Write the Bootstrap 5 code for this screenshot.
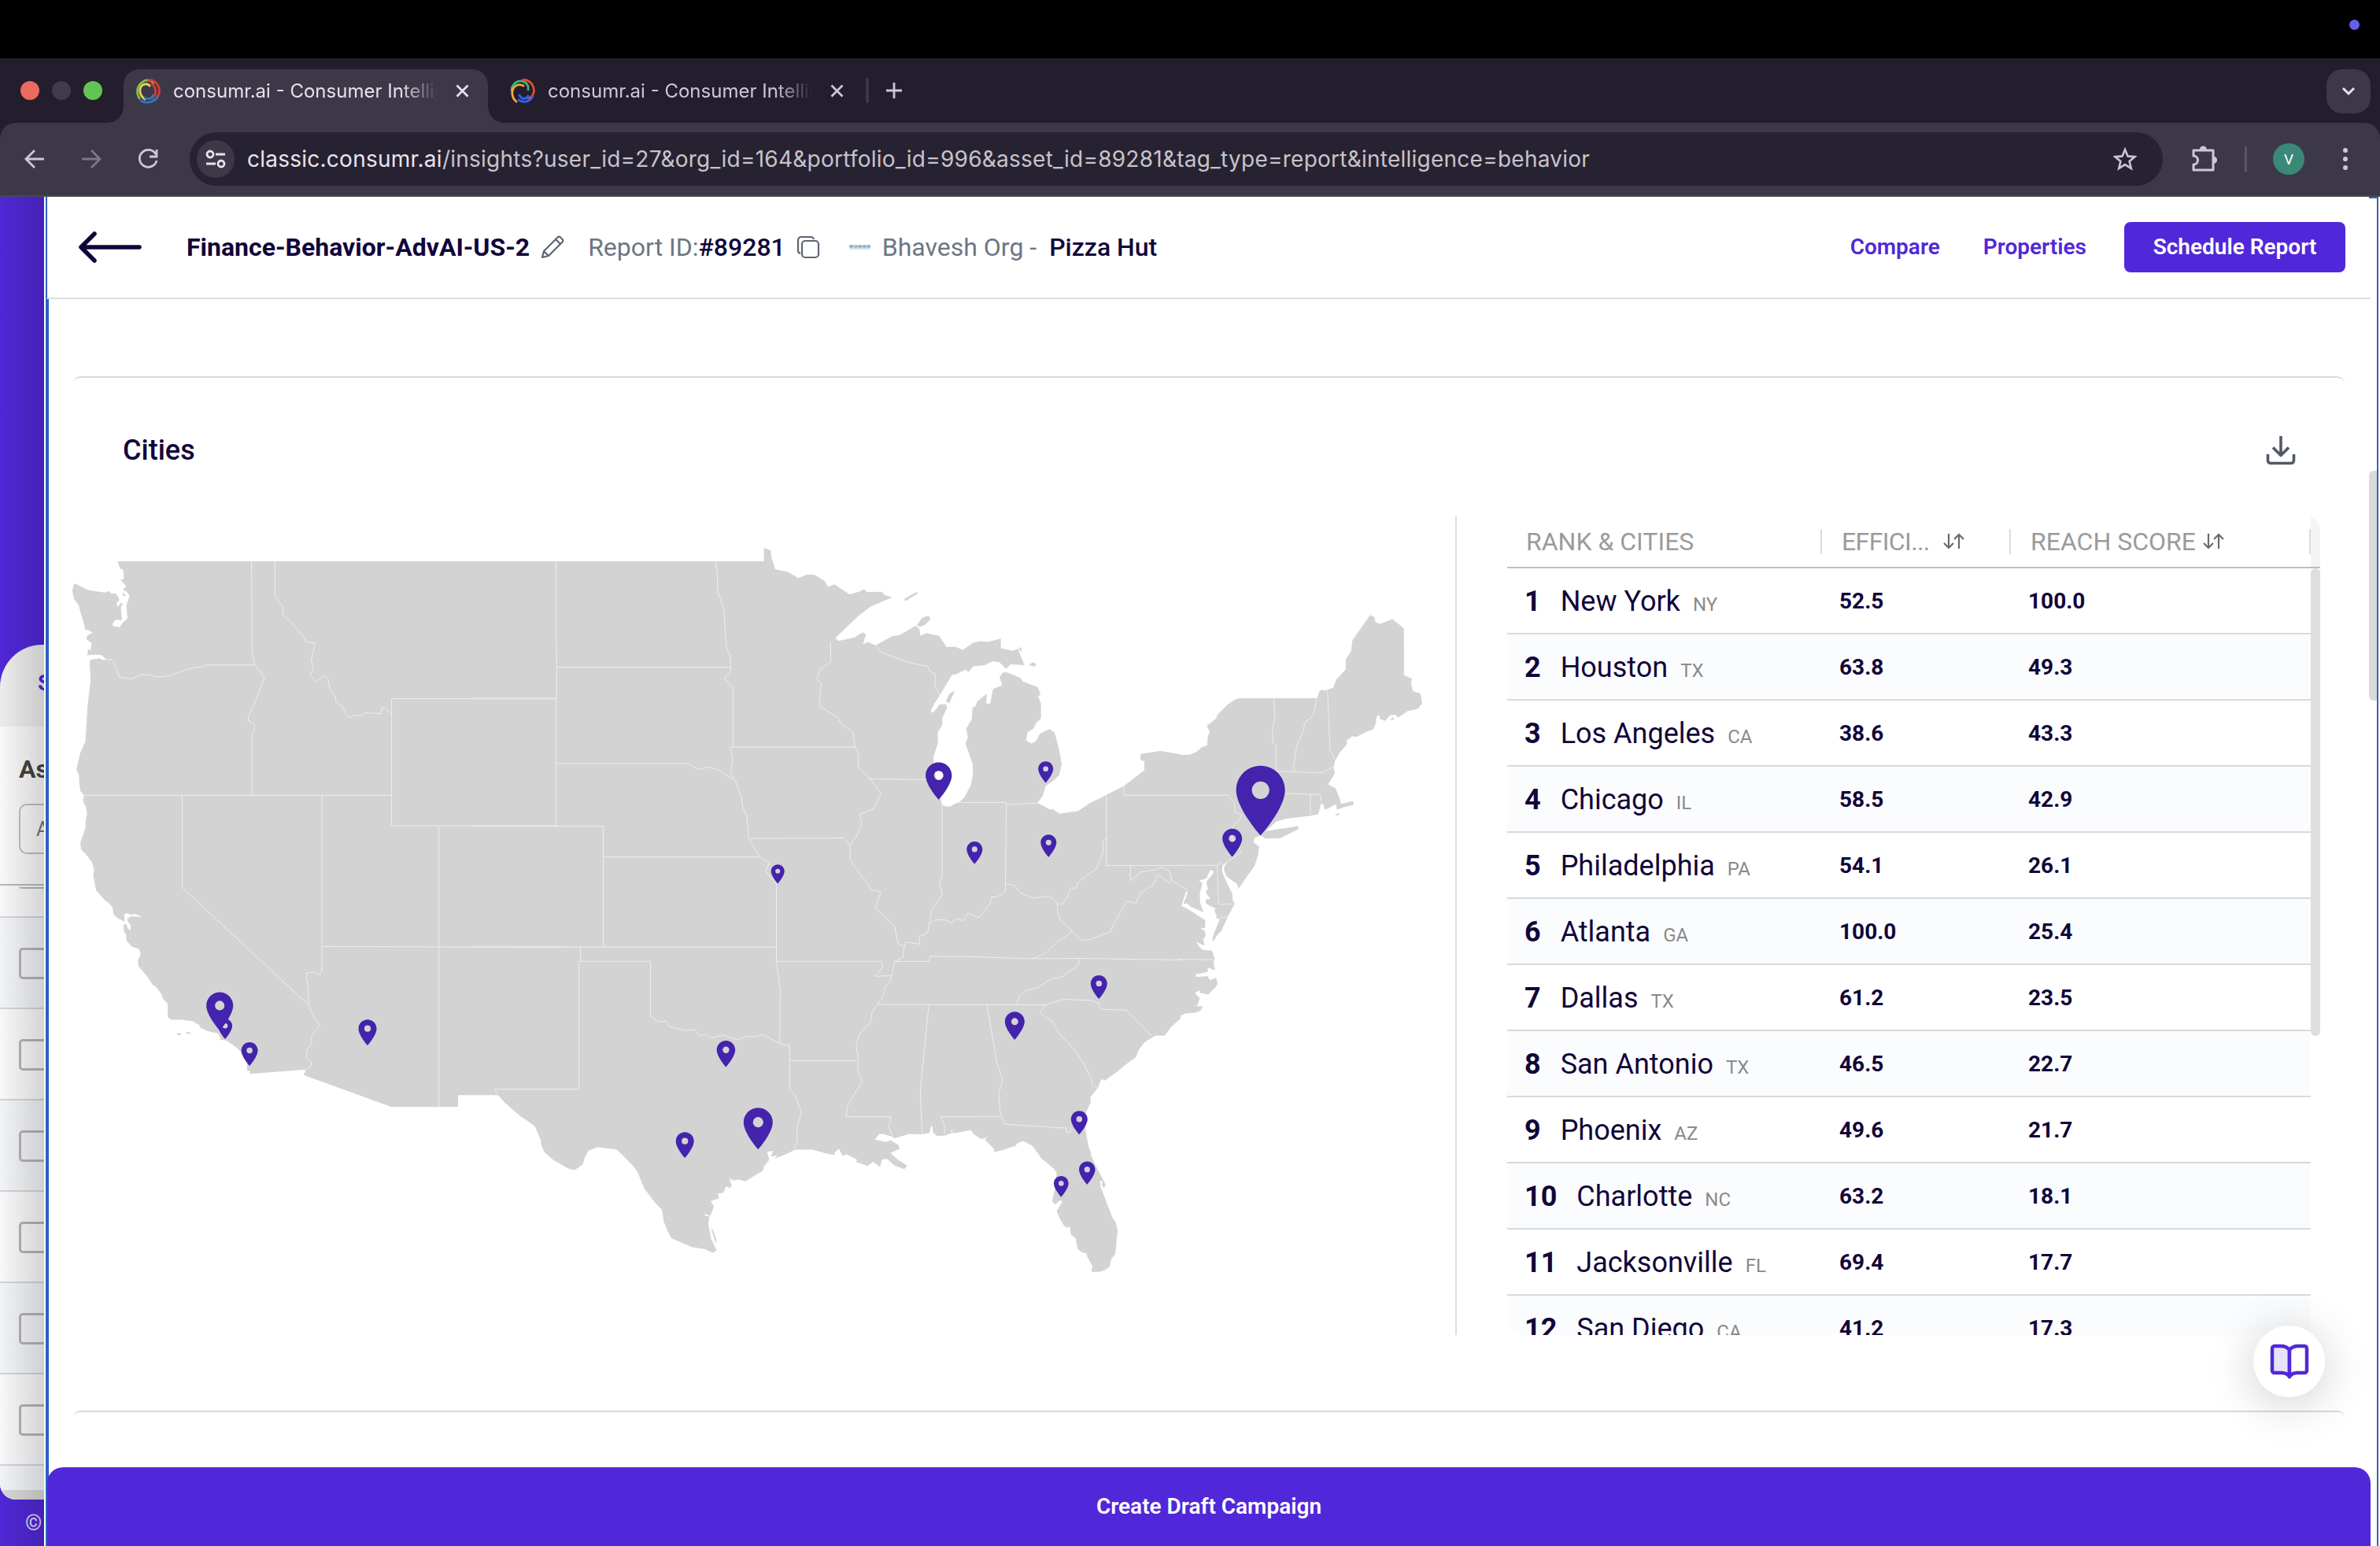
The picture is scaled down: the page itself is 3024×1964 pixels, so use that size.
<!DOCTYPE html>
<html lang="en">
<head>
<meta charset="utf-8">
<title>consumr.ai - Consumer Intelligence</title>
<link href="https://cdn.jsdelivr.net/npm/bootstrap@5.3.0/dist/css/bootstrap.min.css" rel="stylesheet">
<style>
:root{--brand:#5128d9;--ink:#110639;--edge:#2b5fc7}
html,body{width:3024px;height:1964px;overflow:hidden}
body{font-family:Roboto,"Liberation Sans",sans-serif;color:var(--ink);background:#fff;line-height:1}
svg{display:block;flex:none}
.menubar{height:74px;background:#000;padding-right:26px}
.rec-dot{width:13px;height:13px;border-radius:50%;background:#6461ee;margin-top:-11px}
.tabstrip{height:82px;background:#241d2e;font:24px Inter,sans-serif;color:#cfc6dc;padding:14px 12px 0 26px}
.lights{gap:16px;height:54px;margin-right:27px}
.lights i{width:24px;height:24px;border-radius:50%}
.tab-item{height:68px;width:463px;padding:0 24px 13px 15px;position:relative}
.tab-item.tab-on{background:#3d3848;border-radius:20px 20px 0 0;color:#e5e1ea}
.tab-on:before,.tab-on:after{content:"";position:absolute;bottom:0;width:20px;height:20px}
.tab-on:before{left:-20px;background:radial-gradient(circle at 0 0,transparent 19.5px,#3d3848 20px)}
.tab-on:after{right:-20px;background:radial-gradient(circle at 100% 0,transparent 19.5px,#3d3848 20px)}
.tab-title{width:336px;overflow:hidden;white-space:nowrap;line-height:34px;padding-top:1px;-webkit-mask-image:linear-gradient(90deg,#000 86%,transparent)}
.tab-sep{width:4px;height:32px;border-radius:2px;background:#3d3848}
.tab-menu{width:56px;height:56px;border-radius:20px;background:#3d3848}
.toolbar-wrap{background:#241d2e}
.toolbar{height:94px;background:#3d3848;border-radius:20px 20px 0 0;border-bottom:2px solid #4b4551;padding:0 40px 0 31px}
.omni{height:68px;width:2507px;border-radius:34px;background:#272231;padding:0 33px 0 9px;font:28px Inter,sans-serif;color:#c7c3cb}
.omni b{font-weight:400;color:#e8e4ec}
.url-text{letter-spacing:.245px}
.site-btn{width:48px;height:48px;border-radius:50%;background:#3d3848}
.avatar-v{width:40px;height:40px;border-radius:50%;background:#3a8878;color:#fff;font-size:19px}
.viewport{height:1714px}
.under{width:56px;height:1714px;background:var(--brand);position:relative;overflow:hidden}
.under:after{content:"";position:absolute;inset:0;background:linear-gradient(90deg,rgba(0,0,0,.02),rgba(0,0,0,.16))}
.under-panel{margin-top:569px;height:1086px;width:400px;border-radius:54px 0 0 20px;background:#f1f1f1;overflow:hidden}
.under-tab{height:104px;padding:35px 0 0 48px;color:var(--brand);font-weight:700;font-size:28px}
.under-head{height:202px;background:#fdfdfd;padding:36px 0 0 24px;border-bottom:2px solid #b3bdc6}
.under-head h6{font-size:32px;font-weight:700;color:#444;margin:0 0 26px;line-height:36px}
.under-input{height:64px;border:2px solid #c3c3c3;border-radius:10px;padding:18px 20px;font-size:25px;color:#777}
.under-row{height:116px;border-bottom:2px solid #d6d9dc;padding:38px 0 0 24px;background:#fdfdfd}
.under-row i{display:block;width:40px;height:40px;border:3px solid #b7b7b7;border-radius:5px}
.under-row.alt{background:#f6f8fb}
.under-foot{color:#e6defc;font-size:27px;padding:17px 0 0 32px;white-space:nowrap}
.modal-pane{width:2964px;margin-left:2px;border-left:4px solid var(--edge);background:#fff;position:relative}
.pane-edge{width:2px;background:#3d62ad;position:absolute;right:0;top:0;bottom:0;z-index:3}
.pane-edge:before{content:"";position:absolute;right:0;top:0;width:12px;height:2px;background:var(--edge)}
.pane-scroll{width:12px;height:292px;border-radius:6px 0 0 6px;background:#d9d9de;position:absolute;right:0;top:348px}
.pane-head{height:130px;width:2953px;margin-left:-3px;border-left:1px solid var(--edge);border-bottom:2px solid #dedfe1;background:#fff;padding:0 32px 0 40px;font-size:32px}
.muted-ink{color:#6c7683}
.link-brand{color:var(--brand);font-size:28px;font-weight:600;text-decoration:none}
.btn-brand{background:var(--brand);color:#fff;font-size:28px;font-weight:600;width:281px;height:64px;border-radius:8px;padding:0;line-height:64px;border:0}
.pane-body{height:1484px;padding:98px 0 0 31px;overflow:hidden}
.sect{width:2886px;border-top:2px solid #d8dadd;border-radius:9px 9px 0 0}
.sect-first{height:1314px}
.sect-title{height:176px;padding:0 62px 0 63px;font-size:36px;font-weight:500}
.map-col{width:1758px;height:1040px;border-right:2px solid #dcdde0;padding-left:1px}
.land path{fill:#d3d3d3}
.lines path{fill:none;stroke:#eee;stroke-width:1;vector-effect:non-scaling-stroke}
.city-grid{width:1034px;height:1040px;margin-left:64px;border-radius:20px 20px 0 20px;overflow:hidden}
.grid-head{height:66px;border-bottom:2px solid #b9bfc5;font-size:32px;color:#9b9b9b;width:1033px}
.h-cell{height:64px}
.h-cell + .h-cell:before{content:"";width:2px;height:32px;background:#dadcde;margin-right:25px}
.hd{white-space:nowrap}
.c1{width:398px}.c2{width:240px}.c3{width:383px}
.grid-row{height:84px;width:1021px;border-bottom:2px solid #d7dadd;font-size:28px;font-weight:700;padding-top:1px}
.grid-row:nth-child(even){background:#fbfcfe}
.grid-row .c1{padding-left:22px;font-size:36px}
.c-name{font-weight:400;margin-left:25px}
.c-state{font-weight:400;font-size:24px;color:#8a8a8a;margin-left:16px}
.grid-row .c2{padding-left:24px}.grid-row .c3{padding-left:24px}
.grid-thumb{width:12px;height:594px;background:#dedede;border-radius:6px}
.head-corner{width:12px;height:64px;background:#f4f4f4}
.book-btn{position:absolute;left:2801px;top:1434px;width:91px;height:91px;border-radius:50%;background:#fff;box-shadow:0 8px 60px rgba(0,0,0,.2)}
.draft-bar{height:100px;width:2952px;margin-left:-2px;border-radius:20px 20px 0 0;background:var(--brand);color:#fff;font-size:28px;font-weight:600;position:relative}
</style>
<script src="https://cdn.jsdelivr.net/npm/bootstrap@5.3.0/dist/js/bootstrap.bundle.min.js"></script>
</head>
<body>
<div class="menubar d-flex justify-content-end align-items-center"><span class="rec-dot"></span></div>

<div class="tabstrip d-flex align-items-start">
  <div class="lights d-flex align-items-center"><i style="background:#ec6a5e"></i><i style="background:#413b4b"></i><i style="background:#61c454"></i></div>
  <div class="tab-item tab-on d-flex align-items-center">
    <svg width="32" height="32" viewBox="0 0 32 32" fill="none" stroke-width="2.800" stroke-linecap="round"><path d="M5 25C0 17 3 7 11 3C15 1 20 2 23 5" stroke="#8fbf4a"/><path d="M12 26C6 22 4 14 8 9C11 6 16 6 18 9" stroke="#e2d64e"/><path d="M17 1.500C27 2 32 11 30 19C28.500 24 25 27 22 28" stroke="#d93a34"/><path d="M21 7C27 11 27 20 22 24" stroke="#d93a34"/><path d="M7 28C14 32 24 30 28 23M12 24C17 27 21 25 23 21" stroke="#2d78bd"/></svg>
    <span class="tab-title ms-3">consumr.ai - Consumer Intelligen</span>
    <svg class="ms-auto" width="17" height="17" viewBox="0 0 17 17" stroke="#e5e1ea" stroke-width="2.800"><path d="M1.500 1.500l14 14M15.500 1.500l-14 14"/></svg>
  </div>
  <div class="tab-item d-flex align-items-center" style="padding-left:28px;width:476px">
    <svg width="32" height="32" viewBox="0 0 32 32" fill="none" stroke-width="2.800" stroke-linecap="round"><path d="M2 15C2 8 8 2 15 3C21 4 24 9 23 14" stroke="#3fb57c"/><path d="M8 29C2 24 1 15 6 10C9 7 14 7 17 9" stroke="#f2a73b"/><path d="M17 1.500C26 1 32 10 30 18C29 22 26 24 23 25" stroke="#ee4b2b"/><path d="M11 27C19 32 27 28 29 22M12 21C15 27 21 26 23 22" stroke="#2861f0"/></svg>
    <span class="tab-title ms-3">consumr.ai - Consumer Intelligen</span>
    <svg class="ms-auto" width="17" height="17" viewBox="0 0 17 17" stroke="#cfc6dc" stroke-width="2.800"><path d="M1.500 1.500l14 14M15.500 1.500l-14 14"/></svg>
  </div>
  <div class="d-flex align-items-center" style="height:54px;gap:21px;margin-left:4px"><span class="tab-sep"></span>
    <svg width="22" height="22" viewBox="0 0 22 22" stroke="#cfc6dc" stroke-width="2.800"><path d="M11 1v20M1 11h20"/></svg></div>
  <div class="tab-menu ms-auto d-flex align-items-center justify-content-center"><svg width="18" height="12" viewBox="0 0 18 12" fill="none" stroke="#e8e4ec" stroke-width="3"><path d="M2 2l7 7 7-7"/></svg></div>
</div>

<div class="toolbar-wrap"><div class="toolbar d-flex align-items-center">
  <svg width="26" height="24" viewBox="0 0 26 24" fill="none" stroke="#cfc6dc" stroke-width="2.800"><path d="M13 1L2 12l11 11M2 12h23"/></svg>
  <svg style="margin-left:46px" width="26" height="24" viewBox="0 0 26 24" fill="none" stroke="#7d7589" stroke-width="2.800"><path d="M13 1l11 11-11 11M24 12H1"/></svg>
  <svg style="margin-left:46px" width="26" height="26" viewBox="0 0 26 26" fill="none" stroke="#cfc6dc" stroke-width="2.800"><path d="M23 7A11 11 0 1 0 24 15M24 1v9h-9"/></svg>
  <div class="omni d-flex align-items-center" style="margin-left:40px">
    <span class="site-btn d-flex align-items-center justify-content-center"><svg width="26" height="24" viewBox="0 0 26 24" fill="none" stroke="#e8e4ec" stroke-width="2.800"><circle cx="6" cy="6" r="4"/><path d="M13 6h12M1 18h12"/><circle cx="20" cy="18" r="4"/></svg></span>
    <span class="url-text" style="margin-left:16px"><b>classic.consumr.ai</b>/insights?user_id=27&amp;org_id=164&amp;portfolio_id=996&amp;asset_id=89281&amp;tag_type=report&amp;intelligence=behavior</span>
    <svg class="ms-auto" width="30" height="30" viewBox="0 0 30 30" fill="none" stroke="#cbc5d2" stroke-width="2.600"><path d="M15 3l3.500 8.400 9 .7-6.900 5.900 2.200 8.900L15 22.100l-7.800 4.800 2.200-8.900-6.900-5.900 9-.7z"/></svg>
  </div>
  <svg style="margin-left:34px" width="36" height="36" viewBox="0 0 36 36" fill="none" stroke="#cfc6dc" stroke-width="3"><path d="M5 7h25v25H5v-7a5.500 5.500 0 0 0 0-11z" stroke-linejoin="round"/><path d="M13.500 6a3.800 3.800 0 0 1 7.600 0zM30.500 15.500a3.800 3.800 0 0 1 0 7.600z" fill="#cfc6dc" stroke-width="1.500"/></svg>
  <span style="width:3px;height:32px;background:#5b5466;margin-left:34px"></span>
  <span class="avatar-v d-flex align-items-center justify-content-center" style="margin-left:33px">V</span>
  <svg style="margin-left:49px" width="6" height="30" viewBox="0 0 6 30" fill="#cfc6dc"><circle cx="3" cy="4" r="3"/><circle cx="3" cy="15" r="3"/><circle cx="3" cy="26" r="3"/></svg>
</div></div>

<div class="viewport d-flex">
  <aside class="under">
    <div class="under-panel">
      <div class="under-tab">S</div>
      <div class="under-head"><h6>Ass</h6><div class="under-input">A</div></div>
      <div style="height:41px;background:#fdfdfd;border-bottom:2px solid #d6d9dc;padding-left:24px"><i class="d-block" style="width:40px;height:4px;border-bottom:2px solid #b7b7b7;border-radius:0 0 0 4px"></i></div>
      <div>
        <div class="under-row alt"><i></i></div><div class="under-row"><i></i></div><div class="under-row alt"><i></i></div><div class="under-row"><i></i></div><div class="under-row alt"><i></i></div><div class="under-row"><i></i></div>
        <div style="height:31px;background:#f6f8fb"></div><div style="height:12px;background:#dcdcdc"></div>
      </div>
    </div>
    <div class="under-foot">©</div>
  </aside>

  <main class="modal-pane">
    <span class="pane-edge"></span><span class="pane-scroll"></span>
    <header class="pane-head d-flex align-items-center">
      <svg width="80" height="40" viewBox="0 0 80 40" fill="none" stroke="#110639" stroke-width="5.500" stroke-linecap="round" stroke-linejoin="round"><path d="M20 3L3 20l17 17M3 20h74"/></svg>
      <span class="fw-bold" style="margin-left:57px">Finance-Behavior-AdvAI-US-2</span>
      <svg style="margin-left:14px" width="30" height="30" viewBox="0 0 30 30" fill="none" stroke="#5d6772" stroke-width="2.200" stroke-linejoin="round"><path d="M2 28l2-8L21.500 2.500a2.500 2.500 0 0 1 3.500 0l2.500 2.500a2.500 2.500 0 0 1 0 3.500L10 26zM4 20l6 6M19 5l6 6"/></svg>
      <span class="muted-ink" style="margin-left:30px">Report ID:</span><span style="font-weight:500">#89281</span>
      <svg style="margin-left:14px" width="30" height="30" viewBox="0 0 30 30" fill="none" stroke="#5d6772" stroke-width="2.200"><rect x="7" y="7" width="21" height="21" rx="4"/><path d="M5 23a4 4 0 0 1-3-4V6a4 4 0 0 1 4-4h12a4 4 0 0 1 4 3"/></svg>
      <svg style="margin-left:37px" width="28" height="6" viewBox="0 0 28 6"><path d="M0 2h27" stroke="#7db7d8" stroke-width="3.500" stroke-dasharray="5 .6"/><path d="M1 5h26" stroke="#bcc9cf" stroke-width="1.500" stroke-dasharray="2 .6"/><circle cx="7" cy="2" r="1.500" fill="#e3c65a"/></svg>
      <span class="muted-ink" style="margin-left:14px">Bhavesh Org -</span><span style="font-weight:500;margin-left:16px">Pizza Hut</span>
      <a class="link-brand ms-auto" href="#">Compare</a><a class="link-brand" style="margin:0 48px 0 55px" href="#">Properties</a>
      <button class="btn btn-brand">Schedule Report</button>
    </header>

    <div class="pane-body">
      <section class="sect sect-first">
        <div class="sect-title d-flex align-items-center justify-content-between" style="padding-top:8px"><span>Cities</span>
          <svg width="38" height="38" viewBox="0 0 38 38" fill="none" stroke="#505a66" stroke-width="3.600"><path d="M19 1v24M9 15.500l10 10 10-10M2.500 24v8a3.500 3.500 0 0 0 3.500 3.500h26a3.500 3.500 0 0 0 3.500-3.500v-8" stroke-linejoin="round"/></svg>
        </div>
        <div class="d-flex">
          <div class="map-col">
            <svg width="1755" height="1040" viewBox="94 656 1755 1040" overflow="visible">
              <g class="land">
                <g transform="translate(80 680) scale(.408163 .471939)"><path d="M170 70L1568 70 1568 1568 1430 1568 1400 1545 1375 1527 1355 1507 1230 1507 1230 1539 1023 1539 749 1453 757 1438 582 1450 582 1442 573 1441 573 1415 556 1392 535 1375 508 1360 490 1358 488 1346 480 1340 455 1336 428 1326 424 1318 403 1308 370 1304 337 1304 326 1297 326 1260 311 1248 308 1237 291 1217 279 1210 260 1185 235 1160 233 1143 242 1129 237 1114 214 1107 198 1091 196 1075 189 1064 189 1048 198 1047 200 1056 210 1064 211 1049 203 1041 199 1032 212 1026 247 1027 224 1019 214 1022 198 1017 191 1020 192 1040 170 1031 158 1020 154 1003 146 992 130 982 103 955 94 915 97 900 90 880 72 859 57 846 54 827 70 788 71 765 75 750 72 732 63 717 65 700 54 687 50 660 50 648 42 630 54 585 70 555 74 495 77 455 86 390 83 345 85 335 115 331 123 336 135 334 121 323 104 321 76 323 78 305 86 310 89 290 73 280 75 270 92 262 78 255 69 254 65 236 54 206 49 188 35 172 29 150 35 129 80 148 130 154 145 150 150 157 165 157 176 174 167 184 170 193 182 180 186 186 180 194 184 229 165 227 156 235 154 243 176 248 186 235 201 223 197 190 207 163 198 151 190 150 188 145 197 137 180 121 190 116 187 92 178 90zM353 1340L367 1340 367 1346 360 1346zM382 1336L403 1340 386 1342zM185 153L198 164 187 163z"/></g>
                <g transform="translate(600 680) scale(.408163 .57398)"><path d="M-20 57.500L908 57.500 908 28 929 33 932 50 943 75 985 82 1015 95 1040 87 1065 87 1098 102 1107 114 1128 109 1175 131 1207 124 1220 119 1228 126 1275 125 1285 133 1308 137 1240 158 1200 180 1130 228 1140 234 1190 226 1215 215 1226 218 1216 242 1230 236 1255 243 1360 290 1440 310 1455 352 1440 365 1427 390 1435 393 1455 374 1475 374 1478 382 1463 405 1463 420 1449 437 1450 460 1436 490 1437 510 1450 560 1463 598 1485 601 1512 591 1568 591 1568 1322 1548 1316 1520 1321 1490 1322 1497 1317 1485 1314 1489 1324 1470 1329 1445 1329 1435 1322 1432 1308 1425 1306 1419 1324 1390 1326 1362 1325 1312 1335 1300 1325 1268 1325 1253 1337 1287 1343 1302 1339 1327 1350 1330 1358 1302 1367 1325 1382 1354 1395 1345 1403 1315 1395 1290 1380 1275 1382 1270 1398 1248 1387 1230 1396 1195 1387 1198 1382 1165 1370 1153 1374 1142 1358 1128 1366 1130 1371 1110 1370 1060 1360 1005 1360 980 1369 941 1380 950 1372 930 1376 936 1362 918 1365 925 1382 908 1397 905 1406 850 1430 830 1426 812 1428 800 1422 808 1440 800 1445 790 1441 782 1455 765 1457 768 1468 741 1474 752 1487 740 1507 724 1501 725 1508 738 1510 733 1525 745 1568 660 1568 620 1556 608 1540 598 1520 590 1492 570 1478 535 1445 515 1410 500 1395 465 1370 450 1360 390 1354 362 1362 350 1378 344 1393 318 1405 300 1402 253 1383 225 1366 215 1350 213 1338 195 1308 140 1280 110 1260 80 1238 -20 1238z"/></g>
                <g transform="translate(60 1280) scale(.574 .43622)"><path d="M1360 560L1361 586 1365 626 1375 645 1383 672 1410 687 1425 697 1455 703 1473 714 1482 708 1470 675 1463 630 1466 608 1455 606 1458 598 1468 604 1475 577 1469 565zM1470 643L1472 643 1480 670 1481 688 1478 680z"/></g>
                <g transform="translate(1100 720) scale(.333333 .510204)"><path d="M37 196L100 173 130 170 165 157 190 147 205 155 208 172 230 165 280 172 308 200 340 199 370 207 410 189 435 185 465 187 515 179 515 203 560 209 580 204 605 245 553 243 535 254 510 238 483 235 455 245 410 248 392 262 380 256 345 268 330 268 284 318 262 340 247 358 240 380 0 400 0 190z"/><path d="M305 335L320 315 340 309 318 340zM147 80L195 62 197 67 150 86zM195 145L215 127 240 121 247 131 225 145 205 150zM622 244L640 237 651 244 640 249zM583 204L594 200 592 213z"/><path d="M510 275L523 263 540 263 590 277 598 285 655 300 667 317 657 323 668 340 668 378 650 388 640 403 617 412 611 432 632 440 650 433 665 415 700 404 720 413 735 450 747 490 738 518 715 533 687 545 675 570 655 588 705 605 710 602 738 615 810 608 850 590 880 580 917 570 985 547 1063 507 1062 485 1047 480 1048 466 1127 459 1200 467 1200 1125 1165 1145 1140 1167 1105 1167 1065 1183 1040 1200 1030 1220 1000 1235 960 1256 915 1278 905 1273 895 1280 885 1297 857 1320 857 1335 835 1365 836 1400 850 1445 860 1460 700 1480 670 1470 635 1442 602 1430 578 1435 570 1442 492 1457 490 1445 455 1428 463 1417 440 1425 410 1412 402 1403 330 1410 338 1402 325 1398 327 1411 300 1410 292 1416 275 1416 260 1403 250 1390 243 1410 170 1409 107 1420 0 1400 0 700 270 700 280 590 300 597 320 598 350 590 375 575 400 545 409 515 407 490 380 440 389 425 383 403 404 380 407 350 418 348 425 335 462 316 459 340 474 341 485 305 520 295z"/></g>
                <g transform="translate(1400 740) scale(.333333 .57398)"><path d="M0 475L85 450 163 415 162 395 148 390 150 380 222 373 285 382 335 381 360 375 380 365 402 360 403 343 411 330 400 317 437 300 440 293 480 270 505 260 523 256 820 256 830 240 840 237 850 239 882 233 893 215 930 192 930 170 950 152 955 128 1023 72 1040 77 1042 87 1060 92 1107 81 1151 101 1152 205 1182 213 1178 222 1186 240 1215 246 1221 268 1205 279 1165 285 1140 295 1128 299 1120 293 1100 293 1080 306 1060 302 1058 293 1047 297 1045 310 1035 325 1010 330 970 342 955 340 932 350 935 357 905 378 888 397 883 410 888 423 862 447 890 455 905 475 912 490 957 484 960 492 925 497 896 503 893 491 850 503 843 490 835 490 825 513 795 516 700 523 665 529 640 542 605 560 583 565 578 575 600 585 595 605 582 627 560 645 520 678 517 668 490 657 475 650 466 637 466 629 480 619 460 625 458 640 475 663 498 690 498 703 507 711 480 740 455 772 440 780 425 795 421 790 428 775 450 745 435 742 438 738 428 725 435 722 410 715 397 710 395 702 415 700 400 690 395 683 405 680 398 662 425 644 425 637 412 637 398 655 370 660 383 665 373 690 375 710 388 730 340 718 323 710 310 712 328 685 320 685 303 716 320 720 345 729 395 748 393 765 377 765 393 772 395 783 386 790 392 804 360 795 370 805 385 813 420 815 431 835 425 840 432 858 405 853 403 862 358 867 358 873 403 871 412 880 435 875 442 888 432 897 405 912 375 908 372 903 355 908 373 920 365 935 350 937 385 938 375 948 355 952 318 954 298 960 260 980 240 1002 205 1002 170 1011 140 1035 130 1050 98 1063 60 1082 20 1097 10 1103 0 1098zM605 560L625 567 680 566 748 546 750 539 670 546 625 550zM888 516L900 510 908 514zM1098 304L1108 298 1116 304z"/></g>
                <g transform="translate(1240 1400) scale(.333333)"><path d="M0 0L437 0 430 15 417 40 417 100 420 135 432 185 455 240 495 315 488 328 480 318 482 300 474 300 475 322 520 440 533 458 540 490 531 580 515 600 510 628 495 638 478 646 443 648 440 638 445 628 425 590 420 577 403 572 388 560 380 520 362 505 358 475 347 479 335 470 320 445 308 415 330 378 318 375 303 390 292 382 292 370 300 335 308 270 298 255 250 215 215 165 183 148 160 152 152 166 135 170 105 183 70 190 68 178 38 147 44 128 30 140 0 125z"/></g>
              </g>
              <g class="lines">
                <g transform="translate(80 680) scale(.408163 .471939)"><path d="M587 70L589 315 597 349M135 334L150 335 160 345 175 382 213 387 240 376 265 375 292 382 330 378 380 363 415 355 432 354 445 349 597 349 628 382 592 462 577 486 578 500 593 506 597 515 589 541 589 700M65 700L1023 700M371 700L371 948 765 1265M806 700L806 1175 797 1183 780 1176 760 1178 757 1186 762 1215 765 1265 782 1300 800 1318 775 1345 773 1370 758 1388 759 1408 772 1416 772 1430 757 1438M660 70L660 165 683 190 686 216 712 235 760 288 785 290 773 335 779 360 770 375 787 395 813 378 825 387 831 412 848 435 850 450 870 460 882 485 895 491 905 484 925 486 940 478 990 480 995 463 1005 465 1023 482M1535 440L1023 440 1023 782 1535 782M1170 782L1170 1539M806 1107L1568 1109"/></g>
                <g transform="translate(600 680) scale(.408163 .57398)"><path d="M261 58L261 200 263 292 263 361 0 361M261 361L261 644M0 644L408 644 408 910M263 292L805 292M758 58L763 85 764 123 784 165 787 215 792 248 804 270 805 292 802 303 785 316 812 337 812 469M261 505L670 505 703 518 740 513 775 523 812 540M803 469L1192 469M803 469L811 498 803 525 820 545 838 580 843 605 855 620 860 670 895 712M408 712L895 712 925 725 913 743 947 772 947 943M860 671L1157 670 1176 685M0 911L947 911M337 910L337 943M332 943L555 943 555 1064 582 1077 603 1075 615 1088 665 1096 693 1094 710 1109 727 1104 745 1112 760 1110 783 1106 825 1117 855 1109 880 1110 905 1105 957 1125 988 1130 988 1226 1005 1240 1025 1278 1010 1312 1013 1340 1000 1360M332 943L332 1226 70 1226 80 1238M947 943L1273 943 1278 955 1255 976 1305 975M947 943L959 1010 957 1125M988 1163L1198 1163M1255 243L1275 260 1360 282 1418 290 1422 300 1442 308 1440 333 1455 352M1116 236L1116 280 1085 295 1072 317 1086 326 1080 378 1135 402 1150 418 1185 435 1192 469 1202 485 1203 515 1240 540 1272 572 1250 605 1207 618 1212 640 1195 668 1176 685 1177 720 1235 775 1240 784 1272 790 1255 825 1315 865 1325 903 1345 910 1340 935 1315 943 1303 985 1285 1000 1280 1020 1245 1055 1240 1078 1205 1105 1195 1130 1202 1160 1200 1185 1214 1210 1195 1230 1170 1260 1163 1287 1302 1287 1297 1310 1312 1335M1235 539L1415 541M1463 598L1463 750 1455 770 1463 795 1430 830 1423 860 1418 880 1392 888 1393 905 1350 900 1345 910M1421 1040L1395 1230 1400 1323M1470 1325L1470 1305 1458 1287 1568 1287"/></g>
                <g transform="translate(1100 720) scale(.333333 .510204)"><path d="M350 587L535 587M536 592L655 588M536 587L532 810M245 888L262 880 300 878 325 887 345 877 375 881 390 862 432 873 475 838 480 822 500 822 532 810 533 790 565 793 590 812 635 825 700 820 730 838 748 841 768 825 780 800 803 800 810 785 840 770 880 752 905 710 905 685 917 675M917 570L917 744 1200 744M985 547L985 569 1200 569M1009 744L1009 782 1050 760 1100 755 1125 748 1155 757 1166 775 1158 788 1112 766 1095 792 1048 812 1030 838 995 832 937 900 935 908 855 928 820 930 788 908 745 883 733 865 730 838M788 908L725 937 690 960 635 976M110 983L243 983 245 970 410 971 630 976 810 975 1200 979M815 976L810 993 780 1005 752 1020 700 1028 655 1048 610 1056 583 1072 577 1090M45 1090L685 1091 755 1077 865 1080 890 1088 893 1102 993 1104 1090 1168M685 1091L663 1110 710 1132 735 1160 785 1195 825 1230 860 1275 865 1290 885 1298M462 1091L500 1235 522 1280 507 1310 512 1355 528 1388 765 1398 768 1409 780 1408 782 1395M405 1369L515 1369"/></g>
                <g transform="translate(1400 740) scale(.333333 .57398)"><path d="M290 471L480 471 503 485 508 508 535 515 500 540 495 565 533 597 500 610 470 620M290 626L440 626 460 620M440 626L445 712 505 712M290 834L431 835M655 256L660 295 650 325 652 355 664 360 664 418 840 421 883 408M820 256L805 295 773 310 768 330 743 360 730 410 735 418M860 236L870 370 890 395M690 467L832 469 838 487M795 469L795 514M260 655L290 668 330 682M450 742L478 739"/></g>
              </g>
              <defs><path id="pin" fill="#4423ad" fill-rule="evenodd" d="M0-20C-3.870-20-7-16.870-7-13C-7-7.750 0 0 0 0S7-7.750 7-13C7-16.870 3.870-20 0-20zM0-10.500A2.500 2.500 0 0 1 0-15.500A2.500 2.500 0 0 1 0-10.500z"/></defs>
              <g id="pins"></g>
            </svg>
          </div>
          <div class="city-grid">
            <div class="grid-head d-flex">
              <div class="h-cell c1 d-flex align-items-center" style="padding-left:24px"><span class="hd">RANK &amp; CITIES</span></div>
              <div class="h-cell c2 d-flex align-items-center"><span class="hd" style="width:113px;letter-spacing:-.6px">EFFICI...</span><svg style="margin-left:15px" width="30" height="24" viewBox="0 0 30 24" fill="none" stroke="#6a6a6a" stroke-width="2.200"><path d="M8 2v17M2 14l6 6 6-6M21 21V3M15 9l6-6 6 6"/></svg></div>
              <div class="h-cell c3 d-flex align-items-center"><span class="hd" style="width:209px">REACH SCORE</span><svg style="margin-left:9px" width="30" height="24" viewBox="0 0 30 24" fill="none" stroke="#6a6a6a" stroke-width="2.200"><path d="M8 2v17M2 14l6 6 6-6M21 21V3M15 9l6-6 6 6"/></svg><span class="ms-auto" style="width:2px;height:32px;background:#dadcde"></span></div>
              <div class="head-corner"></div>
            </div>
            <div class="d-flex align-items-start"><div id="rows"></div><div class="grid-thumb"></div></div>
          </div>
        </div>
      </section>
      <section class="sect" style="height:120px"></section>
    </div>
    <div class="draft-bar d-flex align-items-center justify-content-center">Create Draft Campaign</div>
    <div class="book-btn d-flex align-items-center justify-content-center"><svg width="50" height="46" viewBox="0 0 50 46" stroke="#5128d9" stroke-width="4.500" stroke-linejoin="round"><path d="M25 8C22 4 19 3 14 3H6a3 3 0 0 0-3 3v28a3 3 0 0 0 3 3h9c5 0 8 1.500 10 5z" fill="#e8e2fb"/><path d="M25 8C28 4 31 3 36 3h8a3 3 0 0 1 3 3v28a3 3 0 0 1-3 3h-9c-5 0-8 1.500-10 5z" fill="#fff"/></svg></div>
  </main>
</div>
<script>
const cities=[["New York","NY","52.5","100.0"],["Houston","TX","63.8","49.3"],["Los Angeles","CA","38.6","43.3"],["Chicago","IL","58.5","42.9"],["Philadelphia","PA","54.1","26.1"],["Atlanta","GA","100.0","25.4"],["Dallas","TX","61.2","23.5"],["San Antonio","TX","46.5","22.7"],["Phoenix","AZ","49.6","21.7"],["Charlotte","NC","63.2","18.1"],["Jacksonville","FL","69.4","17.7"],["San Diego","CA","41.2","17.3"]];
document.getElementById("rows").innerHTML=cities.map((c,i)=>`<div class="grid-row d-flex align-items-center"><div class="c1 d-flex align-items-baseline"><span>${i+1}</span><span class="c-name">${c[0]}</span><span class="c-state">${c[1]}</span></div><div class="c2">${c[2]}</div><div class="c3">${c[3]}</div></div>`).join("");
/* tip x, tip y, width */
const pins=[[1601.7,1061.4,62],[1192.7,1016,33.3],[1565.7,1088.4,25],[1328.7,994.5,19],[1238.3,1097.5,20],[1332.3,1088.9,20],[1396.3,1269,21],[1289.3,1321,25],[1371.3,1441.3,21],[1381.3,1504.7,20.5],[1348.3,1520.7,18.7],[988.2,1122.5,17],[922.4,1355.6,23.5],[963.3,1460,37],[870.2,1471,23],[279.2,1309,34],[286.1,1320,18],[317.1,1354,21],[467,1328,23]];
document.getElementById("pins").innerHTML=pins.map(p=>`<use href="#pin" transform="translate(${p[0]} ${p[1]}) scale(${p[2]/14})"/>`).join("");
</script>
</body>
</html>
